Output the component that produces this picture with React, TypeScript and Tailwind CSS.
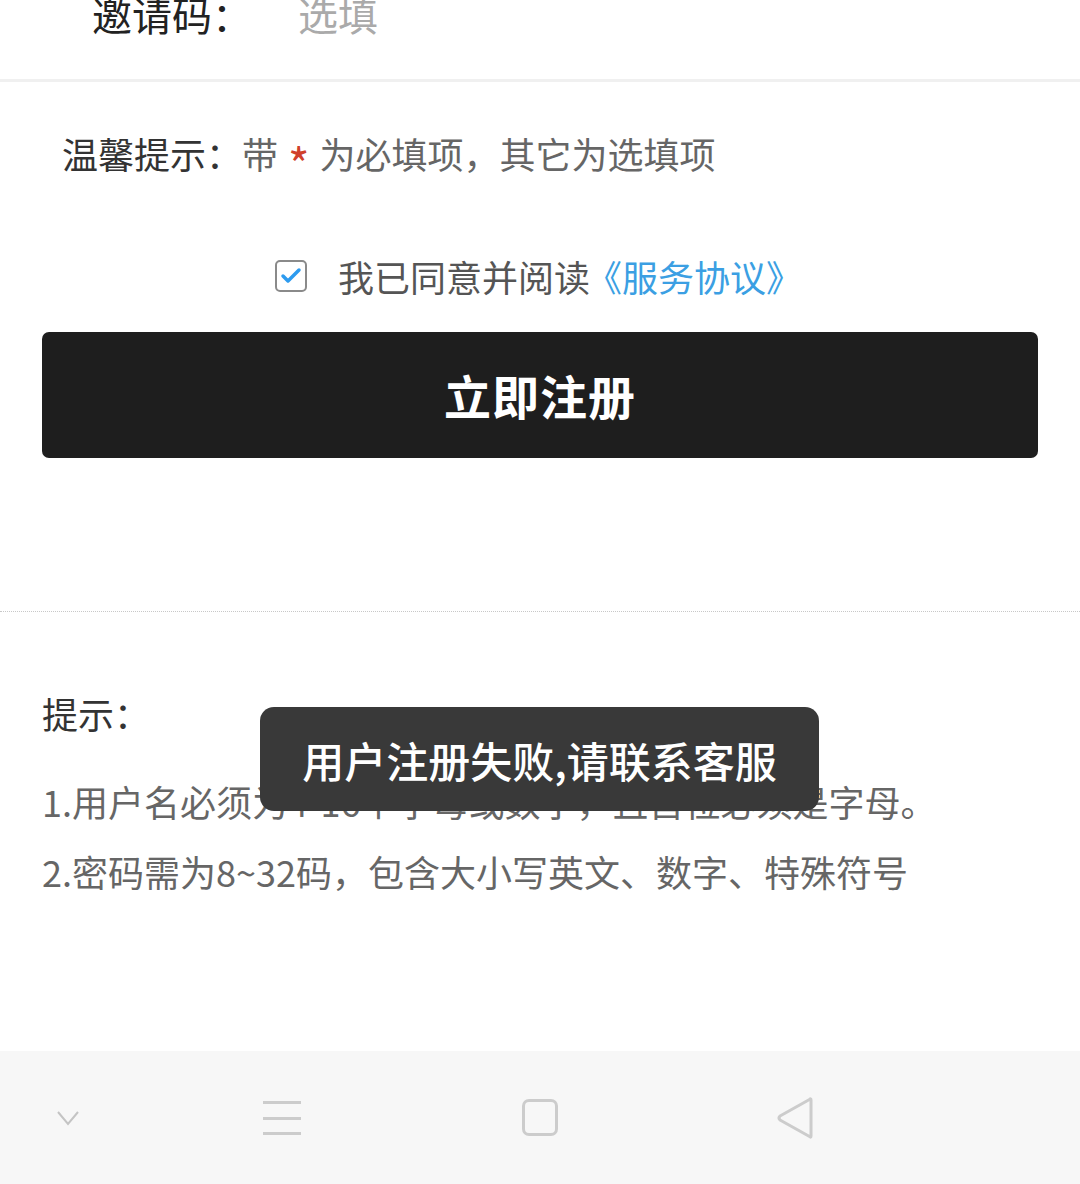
import { Check } from "lucide-react";

const font = { fontFamily: '"Noto Sans CJK SC", "Noto Sans", sans-serif' };

function NavBar() {
  return (
    <div className="mt-auto h-[133px] bg-[#f7f7f7] flex items-center">
      <div className="w-full flex items-center">
        <div className="w-[136px] flex justify-center">
          <svg width="26" height="18" viewBox="0 0 26 18" fill="none">
            <path d="M3 3 L13 15 L23 3" stroke="#c4c4c4" strokeWidth="2" />
          </svg>
        </div>
        <div className="w-[292px] flex justify-center">
          <svg width="38" height="36" viewBox="0 0 38 36">
            <rect x="0" y="1" width="38" height="3" fill="#cccccc" />
            <rect x="0" y="17" width="38" height="3" fill="#cccccc" />
            <rect x="0" y="32" width="38" height="3" fill="#cccccc" />
          </svg>
        </div>
        <div className="w-[224px] flex justify-center">
          <div className="w-[36px] h-[37px] rounded-[7px] border-[3px] border-[#cccccc]" />
        </div>
        <div className="w-[286px] flex justify-center">
          <svg width="40" height="42" viewBox="0 0 40 42" fill="none">
            <path
              d="M36 3 Q36 1 34.5 2.5 L5 19 Q3 21 5 23 L34.5 39.5 Q36 41 36 39 Z"
              stroke="#cccccc"
              strokeWidth="3"
              strokeLinejoin="round"
            />
          </svg>
        </div>
      </div>
    </div>
  );
}

export default function App() {
  return (
    <div className="relative w-[1080px] h-[1184px] bg-white flex flex-col overflow-hidden" style={font}>
      {/* invite code row, scrolled partly off screen */}
      <div className="h-[82px] border-b-[3px] border-[#f0f0f0] overflow-hidden">
        <div className="flex items-center -mt-[8px] h-[44px] text-[40px] leading-[44px]">
          <span className="ml-[92px] w-[206px] text-[#222]">邀请码：</span>
          <span className="text-[#aaaaaa]">选填</span>
        </div>
      </div>

      <div className="h-[142px] flex items-center pl-[62px] text-[36px] text-[#666]">
        <span className="text-[#333]">温馨提示：</span>
        <span>带</span>
        <span className="text-[#d0402a] text-[46px] leading-none mx-[10px] translate-y-[10px]">*</span>
        <span>为必填项，其它为选填项</span>
      </div>

      <div className="h-[104px] flex items-center">
        <div className="ml-[275px] w-[32px] h-[32px] rounded-[5px] border-2 border-[#8a8a8a] flex items-center justify-center">
          <Check size={24} strokeWidth={3.5} color="#2d9bef" />
        </div>
        <span className="ml-[31px] text-[36px] text-[#555]">我已同意并阅读</span>
        <span className="text-[36px] text-[#3b9fe3] -ml-[4px]">《服务协议》</span>
      </div>

      <div className="mt-[4px] mx-[42px] h-[126px] rounded-[7px] bg-[#1e1e1e] flex items-center justify-center">
        <span className="text-white text-[47px] font-bold tracking-[1px]">立即注册</span>
      </div>

      <div className="mt-[153px] border-t border-dotted border-[#c8c8c8]" />

      <div className="px-[42px] pt-[76px]">
        <div className="h-[50px] flex items-center text-[36px] text-[#333]">提示：</div>
        <div className="mt-[28px] text-[36px] leading-[70px] text-[#666]">
          <p>1.用户名必须为4-16个字母或数字，且首位必须是字母。</p>
          <p>2.密码需为8~32码，包含大小写英文、数字、特殊符号</p>
        </div>
      </div>

      <NavBar />

      <div className="absolute left-[260px] top-[707px] w-[559px] h-[104px] rounded-[14px] bg-[#393939] flex items-center justify-center">
        <span className="text-white text-[42px] font-medium">用户注册失败,请联系客服</span>
      </div>
    </div>
  );
}
